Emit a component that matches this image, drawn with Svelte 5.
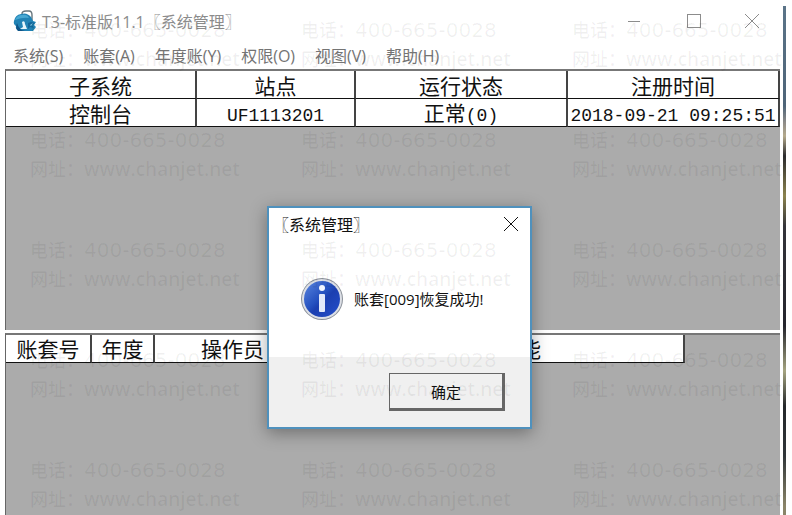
<script lang="ts">
	const menus = ['系统(S)', '账套(A)', '年度账(Y)', '权限(O)', '视图(V)', '帮助(H)'];
	const watermarks = Array.from({ length: 15 }, (_, i) => i);

	let dialogOpen = $state(true);

	function closeDialog() {
		dialogOpen = false;
	}
</script>

<div class="screen">
	<main class="window">
		<header class="title-bar">
			<svg class="app-icon" width="24" height="24" viewBox="0 0 24 24" aria-hidden="true">
				<path d="M9 7 V5 Q9 2 13 2 H16 Q19 2 19 6 V13" fill="none" stroke="#66757d" stroke-width="1.4" />
				<path d="M1 12 Q2 6 8 5 Q14 3 18 8 L20 12 L23 13 L21 16 L23 18 L20 22 H6 Q2 20 3 17 Q0 15 1 12 Z" fill="#2183b5" />
				<path d="M2 11 Q4 6 9 6 Q14 5 16 9 Q10 8 2 11 Z" fill="#47a8d3" />
				<path d="M4 14 Q6 21 12 22 H5 Q2 19 4 14 Z" fill="#0f5588" />
				<path d="M9 13 Q12 11 12 15 L14 20 H7 L10 18 Z" fill="#e5f5fb" />
				<path d="M15 14 L18 13 L22 14 L19 16 L21 19 L17 18 L15 20 Z" fill="#12669a" />
				<path d="M17 16 L20 14 L18 17 Z" fill="#8ccce3" />
			</svg>
			<h1>T3-标准版11.1〖系统管理〗</h1>
			<div class="window-buttons">
				<button type="button" aria-label="最小化">
					<svg width="14" height="14" viewBox="0 0 14 14"><path d="M1 7.5 H13" /></svg>
				</button>
				<button type="button" aria-label="最大化">
					<svg width="14" height="14" viewBox="0 0 14 14"><rect x="0.5" y="0.5" width="13" height="13" /></svg>
				</button>
				<button type="button" aria-label="关闭">
					<svg width="14" height="14" viewBox="0 0 14 14"><path d="M0 0 L14 14 M14 0 L0 14" /></svg>
				</button>
			</div>
		</header>

		<nav class="menu-bar">
			{#each menus as menu}
				<button type="button">{menu}</button>
			{/each}
		</nav>

		<section class="pane sessions">
			<table>
				<colgroup>
					<col class="col-system" />
					<col class="col-station" />
					<col class="col-status" />
					<col />
				</colgroup>
				<thead>
					<tr>
						<th>子系统</th>
						<th>站点</th>
						<th>运行状态</th>
						<th>注册时间</th>
					</tr>
				</thead>
				<tbody>
					<tr>
						<td>控制台</td>
						<td><span class="latin">UF1113201</span></td>
						<td>正常<span class="latin">(0)</span></td>
						<td><span class="latin">2018-09-21 09:25:51</span></td>
					</tr>
				</tbody>
			</table>
		</section>

		<section class="pane tasks">
			<table class="task-table">
				<colgroup>
					<col class="col-account" />
					<col class="col-year" />
					<col class="col-operator" />
					<col class="col-blank" />
					<col />
				</colgroup>
				<thead>
					<tr>
						<th>账套号</th>
						<th>年度</th>
						<th>操作员</th>
						<th></th>
						<th>功能</th>
					</tr>
				</thead>
			</table>
		</section>
	</main>
	<div class="desktop-edge"></div>

	{#if dialogOpen}
		<div class="dialog" role="dialog" aria-labelledby="dialog-title">
			<div class="dialog-title">
				<h2 id="dialog-title">〖系统管理〗</h2>
				<button type="button" aria-label="关闭" onclick={closeDialog}>
					<svg width="14" height="14" viewBox="0 0 14 14"><path d="M0 0 L14 14 M14 0 L0 14" /></svg>
				</button>
			</div>
			<div class="dialog-body">
				<svg width="44" height="44" viewBox="0 0 44 44" aria-hidden="true">
					<defs>
						<linearGradient id="info-fill" x1="0" y1="0" x2="1" y2="1">
							<stop offset="0" stop-color="#5a86df" />
							<stop offset="0.45" stop-color="#2450bf" />
							<stop offset="0.55" stop-color="#1b3fb0" />
							<stop offset="1" stop-color="#2550cc" />
						</linearGradient>
					</defs>
					<circle cx="22" cy="22" r="21" fill="#8a9099" />
					<circle cx="22" cy="22" r="20" fill="#dcdfe6" />
					<circle cx="22" cy="22" r="18" fill="url(#info-fill)" />
					<circle cx="22" cy="11" r="3" fill="#f2f6ff" />
					<rect x="19" y="17" width="6" height="18" rx="1" fill="#e2e9fa" />
				</svg>
				<p>账套[009]恢复成功!</p>
			</div>
			<div class="dialog-footer">
				<button type="button" class="ok" onclick={closeDialog}>确定</button>
			</div>
		</div>
	{/if}

	<div class="watermarks" aria-hidden="true">
		{#each watermarks as mark (mark)}
			<div class="watermark">
				<span>电话：<span class="digits">400-665-0028</span></span>
				<span>网址：<span class="site">www.chanjet.net</span></span>
			</div>
		{/each}
	</div>
</div>

<style>
	:global(body) {
		background: #fff;
	}

	.screen {
		position: relative;
		display: flex;
		min-height: 100vh;
		padding-right: 6px;
		box-sizing: border-box;
		overflow: hidden;
		font-family: 'Open Sans', 'Noto Sans CJK SC', sans-serif;
		font-size: 16px;
		color: #111;
	}

	.window {
		flex: 1;
		display: flex;
		flex-direction: column;
		padding: 0 3px 0 5px;
	}

	.desktop-edge {
		width: 3px;
		margin-top: 6px;
		background: linear-gradient(#5b7488 0, #4e6478 100px, #8c8a88 116px, #b5aa8c 130px, #2b2b2e 150px, #8b834e 190px, #34343a 220px, #24242c 320px, #a5a480 365px, #24272a 400px, #30363a 450px, #8a8468 500px);
	}

	button {
		font: inherit;
		color: inherit;
		padding: 0;
		border: 0;
		background: none;
	}

	.title-bar {
		display: flex;
		align-items: center;
		height: 42px;
		padding-left: 8px;
		gap: 5px;
		color: #8c8c8c;
	}

	h1,
	h2 {
		margin: 0;
		font-size: 16px;
		font-weight: 400;
		white-space: nowrap;
	}

	.window-buttons {
		display: flex;
		margin-left: auto;
	}

	.window-buttons button {
		display: grid;
		place-items: center;
		width: 60px;
		height: 42px;
	}

	.window-buttons button:last-child {
		width: 56px;
	}

	button svg {
		fill: none;
		stroke: currentColor;
	}

	.menu-bar {
		display: flex;
		gap: 20px;
		height: 27px;
		padding-left: 8px;
		color: #747474;
	}

	.menu-bar button {
		line-height: 24px;
	}

	.pane {
		background: #ababab;
		border-top: 2px solid #777;
		border-left: 1px solid #666;
		box-sizing: border-box;
	}

	.sessions {
		flex: 261;
	}

	.tasks {
		flex: 182;
		margin-top: 3px;
	}

	table {
		width: 100%;
		table-layout: fixed;
		border-collapse: separate;
		border-spacing: 0;
		font-family: 'Noto Sans CJK SC', sans-serif;
		font-size: 21px;
	}

	th,
	td {
		height: 28px;
		box-sizing: border-box;
		padding: 0;
		background: #fff;
		border-right: 2px solid #444;
		border-bottom: 1px solid #111;
		font-weight: 400;
		line-height: 24px;
		text-align: center;
		white-space: nowrap;
	}

	.latin {
		font-family: 'Liberation Mono', monospace;
		font-size: 18px;
		line-height: 1;
	}

	.col-system {
		width: 191px;
	}

	.col-station {
		width: 159px;
	}

	.col-status {
		width: 212px;
	}

	.task-table {
		width: calc(100% - 95px);
	}

	.col-account {
		width: 86px;
	}

	.col-year {
		width: 63px;
	}

	.col-operator {
		width: 157px;
	}

	.col-blank {
		width: 45px;
	}

	.dialog {
		position: absolute;
		left: 267px;
		top: 206px;
		width: 265px;
		box-sizing: border-box;
		border: 2px solid #4f91bd;
		background: #fff;
		box-shadow: 0 4px 16px rgba(0, 0, 0, 0.35);
	}

	.dialog-title {
		display: flex;
		align-items: center;
		justify-content: space-between;
		height: 32px;
		padding: 0 12px 0 4px;
	}

	.dialog-title button {
		display: grid;
	}

	.dialog-body {
		display: flex;
		align-items: center;
		gap: 10px;
		height: 117px;
		padding-left: 31px;
	}

	.dialog-body p {
		margin: 0;
		font-size: 15px;
	}

	.dialog-footer {
		display: flex;
		justify-content: flex-end;
		padding: 16px 25px;
		background: #f0f0f0;
	}

	.ok {
		width: 116px;
		height: 38px;
		border: 1px solid #666;
		border-right: 3px solid #666;
		border-bottom: 3px solid #666;
		font-size: 15px;
	}

	.watermarks {
		position: absolute;
		inset: 0;
		display: grid;
		grid-template-columns: repeat(3, 271px);
		grid-auto-rows: 110px;
		padding: 16px 0 0 30px;
		overflow: hidden;
		pointer-events: none;
		color: rgba(0, 0, 0, 0.06);
	}

	.watermark {
		display: flex;
		flex-direction: column;
		font-size: 18px;
		font-weight: 500;
		line-height: 29px;
		white-space: nowrap;
	}

	.digits {
		font-family: 'DejaVu Sans', sans-serif;
		font-size: 20px;
	}

	.site {
		font-size: 19px;
		font-weight: 600;
	}
</style>
